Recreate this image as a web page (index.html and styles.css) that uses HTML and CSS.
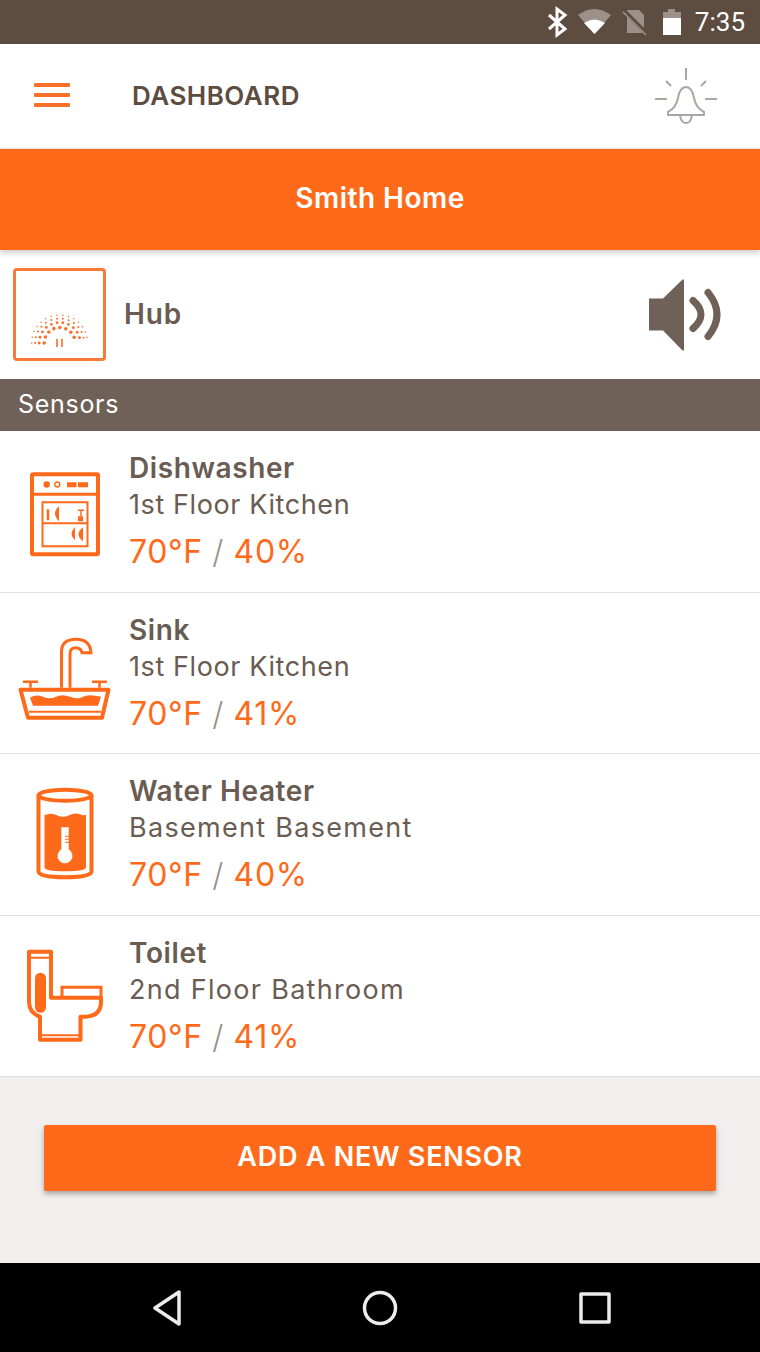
FILE: index.html
```html
<!DOCTYPE html>
<html lang="en">

<head>
  <meta charset="UTF-8">
  <meta name="viewport" content="width=device-width, initial-scale=1.0">
  <title>Dashboard</title>

  <link rel="stylesheet" href="styles.css">
</head>

<body>
  <div class="status-bar">
    <svg class="status-icons" width="150" height="44" viewBox="0 0 150 44">
      <path d="M9 15 L25 29 L17 35 V9 L25 15 L9 29" fill="none" stroke="#fff" stroke-width="3"/>
      <path d="M38 15 Q54.5 3 71 15 L54.5 34 Z" fill="#9d9088"/>
      <path d="M44 23 Q54.5 16 65 23 L54.5 34 Z" fill="#fff"/>
      <path d="M87 10 H99 L104 15 V33 H87 Z" fill="#9d9088"/>
      <path d="M83 10 L106 33" stroke="#5d4c40" stroke-width="4.5"/>
      <path d="M83 12 L106 35" stroke="#9d9088" stroke-width="1.6"/>
      <path d="M123 12 H128 V9 H135 V12 H141 V35 H123 Z" fill="#9d9088"/>
      <path d="M123 18 H141 V35 H123 Z" fill="#fff"/>
    </svg>
    <span class="clock">7:35</span>
  </div>

  <header class="app-header">
    <div class="menu-btn">
      <span></span>
      <span></span>
      <span></span>
    </div>
    <h1 class="page-title">DASHBOARD</h1>
    <svg class="bell" width="64" height="60" viewBox="0 0 64 60" fill="none" stroke="#aba6a2" stroke-width="2">
      <path d="M32 0 V12 M12 13 L17 18 M52 13 L47 18 M1 31 H13 M51 31 H63"/>
      <path d="M14 47 V44 Q22 40 24 30 Q26 19 32 19 Q38 19 40 30 Q42 40 50 44 V47 Z" stroke-linejoin="round"/>
      <path d="M26 47 Q27 55 32 55 Q37 55 38 47"/>
    </svg>
  </header>

  <div class="home-band">Smith Home</div>

  <section class="hub-row">
    <div class="hub-box">
      <svg width="93" height="93" viewBox="0 0 93 93" fill="none" stroke="#f8702a" stroke-linecap="round">
        <path d="M31.2 75 A15.5 15.5 0 0 1 62.2 75" stroke-width="3.6" stroke-dasharray="0 6.087"/>
        <path d="M26.2 75 A20.5 20.5 0 0 1 67.2 75" stroke-width="2.8" stroke-dasharray="0 5.855"/>
        <path d="M22.2 75 A24.5 24.5 0 0 1 71.2 75" stroke-width="2" stroke-dasharray="0 5.921"/>
        <path d="M18.7 75 A28 28 0 0 1 74.7 75" stroke-width="1.5" stroke-dasharray="0 5.864"/>
        <path d="M44 71 V79 M49 71 V79" stroke-width="1.6" stroke-linecap="butt"/>
      </svg>
    </div>
    <span class="hub-label">Hub</span>
    <svg class="speaker" width="76" height="76" viewBox="0 0 76 76">
      <path d="M3 21.5 H17 L36 3 Q38 1 38 4 V72 Q38 75 36 73 L17 53.5 H3 Z" fill="#6f6157"/>
      <path d="M47 23.5 Q63 37.5 47 51.5 M62 15.5 Q80 37.5 62 59.5" fill="none" stroke="#6f6157" stroke-width="7" stroke-linecap="round"/>
    </svg>
  </section>

  <div class="section-bar">Sensors</div>

  <ul class="sensor-list">
    <li class="sensor">
      <div class="sensor-icon">
        <svg width="110" height="110" viewBox="0 -3.25 110 110" fill="none" stroke="#ff6a1a">
          <rect x="22" y="15" width="66" height="80" stroke-width="4" rx="1"/>
          <path d="M22 35 H88" stroke-width="3"/>
          <circle cx="36.7" cy="25.3" r="3.2" fill="#ff6a1a" stroke="none"/>
          <circle cx="47.3" cy="25.3" r="2.5" stroke-width="1.4"/>
          <path d="M57 23 H66.5 V28 H57 Z M68 23 H78 V28 H68 Z" fill="#ff6a1a" stroke="none"/>
          <rect x="32.5" y="43" width="45" height="44" stroke-width="2"/>
          <path d="M32 64 H78" stroke-width="2"/>
          <path d="M38 50 V61" stroke-width="2.5"/>
          <path d="M49 47 Q41 54 49 62 Z M65 68 Q58 75 65 81 Z M73 68 Q64 75 73 82 Z" fill="#ff6a1a" stroke="none"/>
          <path d="M68 51 H74 M71 51 V57" stroke-width="1.5"/>
          <path d="M68 62 V57 H73 V62 Z" fill="#ff6a1a" stroke="none"/>
        </svg>
      </div>
      <div class="sensor-info">
        <h2 class="sensor-name">Dishwasher</h2>
        <p class="sensor-place">1st Floor Kitchen</p>
        <p class="sensor-reading">70°F <span class="slash">/</span> 40%</p>
      </div>
    </li>
    <li class="sensor">
      <div class="sensor-icon">
        <svg width="110" height="110" viewBox="0 -6.75 110 110" fill="none" stroke="#ff6a1a">
          <path d="M51.5 63 V27 Q51.5 14.5 66 14.5 Q80 14.5 81 28 H72 Q71 23 65.5 23 Q60 23 60 29 V63" stroke-width="3"/>
          <path d="M10.5 65 H98.5 L92 93 H18 Z" stroke-width="4" stroke-linejoin="round"/>
          <path d="M13 57 H28 M20.5 57 V63 M82 57 H97 M89.5 57 V63" stroke-width="2.5"/>
          <path d="M20 73 Q26 69 33 72 T46 72 T60 72 T73 72 T91 72 L88 81 H23 Z" fill="#ff6a1a" stroke="none"/>
          <path d="M19 87 H91" stroke-width="2"/>
        </svg>
      </div>
      <div class="sensor-info">
        <h2 class="sensor-name">Sink</h2>
        <p class="sensor-place">1st Floor Kitchen</p>
        <p class="sensor-reading">70°F <span class="slash">/</span> 41%</p>
      </div>
    </li>
    <li class="sensor">
      <div class="sensor-icon">
        <svg width="110" height="110" viewBox="0 -0.25 110 110" fill="none" stroke="#ff6a1a">
          <ellipse cx="55" cy="16" rx="26.5" ry="5.5" stroke-width="4"/>
          <path d="M28.5 16 V92 Q28.5 98 55 98 Q81.5 98 81.5 92 V16" stroke-width="4"/>
          <path d="M34.5 36 Q41 33 47 36 T59 36 T70 35 T76 35 V88 Q76 92 55 92 Q34.5 92 34.5 88 Z" fill="#ff6a1a" stroke="none"/>
          <path d="M51.3 48 H58.7 V70 A7.5 7.5 0 1 1 51.3 70 Z" fill="#fff" stroke="none"/>
          <path d="M55 57 H60 M55 60 H60 M55 63 H60" stroke-width="1"/>
        </svg>
      </div>
      <div class="sensor-info">
        <h2 class="sensor-name">Water Heater</h2>
        <p class="sensor-place sensor-place-wide">Basement Basement</p>
        <p class="sensor-reading">70°F <span class="slash">/</span> 40%</p>
      </div>
    </li>
    <li class="sensor">
      <div class="sensor-icon">
        <svg width="110" height="110" viewBox="0 1.25 110 110" fill="none" stroke="#ff6a1a">
          <path d="M19 12 H41 V58 H91 V62 Q91 76 76 77 H70.5 V100 H30 V77 Q19 73 19 62 Z" stroke-width="4" stroke-linejoin="round"/>
          <path d="M52 57 V47.5 H91 V58" stroke-width="3"/>
          <path d="M20 18 H41" stroke-width="2"/>
          <path d="M31 95.5 H70" stroke-width="2"/>
          <rect x="25" y="33" width="11" height="40" rx="5.5" fill="#ff6a1a" stroke="none"/>
        </svg>
      </div>
      <div class="sensor-info">
        <h2 class="sensor-name">Toilet</h2>
        <p class="sensor-place sensor-place-wide">2nd Floor Bathroom</p>
        <p class="sensor-reading">70°F <span class="slash">/</span> 41%</p>
      </div>
    </li>
  </ul>

  <div class="add-area">
    <button class="add-btn">ADD A NEW SENSOR</button>
  </div>

  <nav class="nav-bar">
    <svg width="30" height="36" viewBox="0 0 30 36" fill="none" stroke="#ececec" stroke-width="3.5" stroke-linejoin="round">
      <path d="M28 2 V34 L4 18 Z"/>
    </svg>
    <svg width="36" height="36" viewBox="0 0 36 36" fill="none" stroke="#ececec" stroke-width="3.5">
      <circle cx="18" cy="18" r="15.5"/>
    </svg>
    <svg width="32" height="32" viewBox="0 0 32 32" fill="none" stroke="#ececec" stroke-width="3.5" stroke-linejoin="round">
      <rect x="2" y="2" width="28" height="28"/>
    </svg>
  </nav>
</body>

</html>
```

FILE: styles.css
```css
* {
  box-sizing: border-box;
}

body {
  background: #fff;
  color: #6a5c52;
  font-family: "Inter", "Liberation Sans", sans-serif;
  height: 1352px;
  margin: 0;
  overflow: hidden;
  width: 760px;
}

h1,
h2,
p,
ul {
  margin: 0;
  padding: 0;
}

.status-bar {
  align-items: center;
  background: #5d4c40;
  color: #fff;
  display: flex;
  height: 44px;
  justify-content: flex-end;
  padding-right: 15px;
}

.clock {
  font-family: "Roboto", sans-serif;
  font-size: 26px;
  margin-left: 5px;
}

.app-header {
  align-items: center;
  display: flex;
  height: 104px;
  padding: 0 42px 0 34px;
}

.menu-btn {
  display: flex;
  flex-direction: column;
  gap: 6px;
  margin-bottom: 2px;
  width: 36px;
}

.menu-btn span {
  background: #f8702a;
  border-radius: 1px;
  height: 4px;
}

.page-title {
  color: #5d4c40;
  flex: 1;
  font-size: 26px;
  font-weight: 600;
  letter-spacing: 0.5px;
  margin-bottom: 2px;
  margin-left: 62px;
}

.bell {
  margin-top: 4px;
}

.home-band {
  align-items: center;
  background: #ff6a1a;
  border-top: 1px solid #e8e4e1;
  box-shadow: 0 3px 6px rgba(0, 0, 0, 0.2);
  color: #fff;
  display: flex;
  font-size: 28px;
  font-weight: 600;
  height: 102px;
  justify-content: center;
  letter-spacing: 0.5px;
  padding-bottom: 4px;
  position: relative;
}

.hub-row {
  align-items: center;
  display: flex;
  height: 129px;
  padding: 0 38px 0 13px;
}

.hub-box {
  border: 3px solid #f97a38;
  border-radius: 4px;
  height: 93px;
  width: 93px;
}

.hub-box svg {
  display: block;
  margin: -3px;
}

.hub-label {
  flex: 1;
  font-size: 28px;
  font-weight: 600;
  letter-spacing: 0.9px;
  margin-bottom: 2px;
  margin-left: 18px;
}

.section-bar {
  align-items: center;
  background: #6f6157;
  color: #fff;
  display: flex;
  font-size: 25px;
  height: 52px;
  letter-spacing: 0.7px;
  padding: 0 0 2px 18px;
}

.sensor-list {
  list-style: none;
}

.sensor {
  align-items: center;
  border-bottom: 1px solid #e4e0dd;
  display: flex;
  height: 161.5px;
}

.sensor-icon {
  height: 110px;
  margin-left: 10px;
  width: 110px;
}

.sensor-info {
  margin-left: 9px;
  padding-top: 4px;
}

.sensor-name {
  font-size: 28px;
  font-weight: 600;
  letter-spacing: 0.6px;
  line-height: 36px;
}

.sensor-place {
  font-size: 27px;
  letter-spacing: 0.6px;
  line-height: 38px;
}

.sensor-place-wide {
  letter-spacing: 1.3px;
}

.sensor-reading {
  color: #ff6a1a;
  font-size: 32px;
  letter-spacing: 0.6px;
  line-height: 48px;
  margin-top: 4px;
}

.slash {
  color: #9a918b;
  font-weight: 300;
}

.add-area {
  background: #f1eeed;
  height: 186px;
  padding: 48px 44px 0;
}

.add-btn {
  background: #ff6a1a;
  border: 0;
  border-radius: 2px;
  box-shadow: 0 3px 5px rgba(0, 0, 0, 0.3);
  color: #fff;
  font-family: inherit;
  font-size: 27px;
  font-weight: 600;
  height: 66px;
  letter-spacing: 0.75px;
  padding-bottom: 4px;
  width: 100%;
}

.nav-bar {
  align-items: center;
  background: #000;
  display: flex;
  height: 89px;
  justify-content: space-between;
  padding: 0 149px 0 151px;
}
```
